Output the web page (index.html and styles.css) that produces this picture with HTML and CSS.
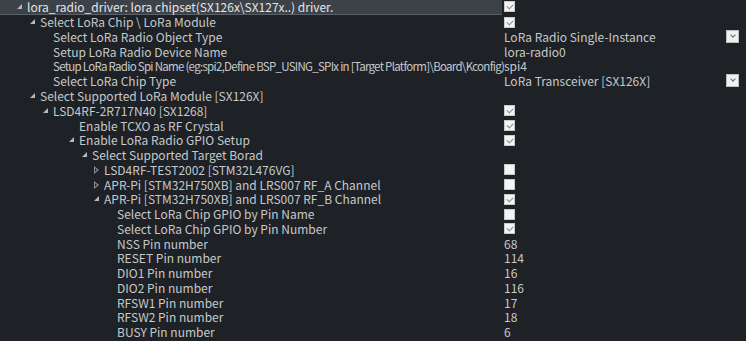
FILE: index.html
```html
<!doctype html>
<html lang="en">
<head>
  <meta charset="utf-8">
  <title>RT-Thread Settings</title>
  <link rel="stylesheet" href="styles.css">
</head>
<body>
  <div class="tree">
    <div class="row sel l0"><span class="tw open"></span><span class="label">lora_radio_driver: lora chipset(SX126x\SX127x..) driver.</span><span class="val"><span class="cb on"></span></span></div>
    <div class="row l1"><span class="tw open"></span><span class="label">Select LoRa Chip \ LoRa Module</span><span class="val"><span class="cb on"></span></span></div>
    <div class="row l2"><span class="tw"></span><span class="label">Select LoRa Radio Object Type</span><span class="val">LoRa Radio Single-Instance<span class="dd"></span></span></div>
    <div class="row l2"><span class="tw"></span><span class="label">Setup LoRa Radio Device Name</span><span class="val">lora-radio0</span></div>
    <div class="row l2"><span class="tw"></span><span class="label long">Setup LoRa Radio Spi Name (eg:spi2,Define BSP_USING_SPIx in [Target Platform]\Board\Kconfig)</span><span class="val">spi4</span></div>
    <div class="row l2"><span class="tw"></span><span class="label">Select LoRa Chip Type</span><span class="val">LoRa Transceiver [SX126X]<span class="dd"></span></span></div>
    <div class="row l1"><span class="tw open"></span><span class="label">Select Supported LoRa Module [SX126X]</span><span class="val"></span></div>
    <div class="row l2"><span class="tw open"></span><span class="label">LSD4RF-2R717N40 [SX1268]</span><span class="val"><span class="cb on"></span></span></div>
    <div class="row l3"><span class="tw"></span><span class="label">Enable TCXO as RF Crystal</span><span class="val"><span class="cb on"></span></span></div>
    <div class="row l3"><span class="tw open"></span><span class="label">Enable LoRa Radio GPIO Setup</span><span class="val"><span class="cb on"></span></span></div>
    <div class="row l4"><span class="tw open"></span><span class="label">Select Supported Target Borad</span><span class="val"></span></div>
    <div class="row l5"><span class="tw closed"></span><span class="label">LSD4RF-TEST2002 [STM32L476VG]</span><span class="val"><span class="cb"></span></span></div>
    <div class="row l5"><span class="tw closed"></span><span class="label">APR-Pi [STM32H750XB] and LRS007 RF_A Channel</span><span class="val"><span class="cb"></span></span></div>
    <div class="row l5"><span class="tw open"></span><span class="label">APR-Pi [STM32H750XB] and LRS007 RF_B Channel</span><span class="val"><span class="cb on"></span></span></div>
    <div class="row l6"><span class="tw"></span><span class="label">Select LoRa Chip GPIO by Pin Name</span><span class="val"><span class="cb"></span></span></div>
    <div class="row l6"><span class="tw"></span><span class="label">Select LoRa Chip GPIO by Pin Number</span><span class="val"><span class="cb on"></span></span></div>
    <div class="row l6"><span class="tw"></span><span class="label">NSS Pin number</span><span class="val">68</span></div>
    <div class="row l6"><span class="tw"></span><span class="label">RESET Pin number</span><span class="val">114</span></div>
    <div class="row l6"><span class="tw"></span><span class="label">DIO1 Pin number</span><span class="val">16</span></div>
    <div class="row l6"><span class="tw"></span><span class="label">DIO2 Pin number</span><span class="val">116</span></div>
    <div class="row l6"><span class="tw"></span><span class="label">RFSW1 Pin number</span><span class="val">17</span></div>
    <div class="row l6"><span class="tw"></span><span class="label">RFSW2 Pin number</span><span class="val">18</span></div>
    <div class="row l6"><span class="tw"></span><span class="label">BUSY Pin number</span><span class="val">6</span></div>
  </div>
</body>
</html>
```

FILE: styles.css
```css
html, body {
  margin: 0;
  padding: 0;
  background: #1e2125;
}
body {
  font-family: "Noto Sans CJK SC", "Noto Sans", sans-serif;
  font-size: 12px;
  color: #c6c9cc;
  overflow: hidden;
}
.tree {
  width: 746px;
}
.row {
  display: flex;
  align-items: center;
  height: 14.77px;
  line-height: 14px;
  white-space: nowrap;
}
.row.sel {
  box-sizing: border-box;
  background: linear-gradient(to right, #3c4248 0, #3c4248 502px, transparent 502px);
  border-bottom: 1px solid;
  border-image: linear-gradient(to right, #5b6168 0, #5b6168 502px, transparent 502px) 1;
  color: #e4e6e8;
}
.l0 { padding-left: 13px; }
.l1 { padding-left: 26px; }
.l2 { padding-left: 39px; }
.l3 { padding-left: 65px; }
.l4 { padding-left: 78px; }
.l5 { padding-left: 90px; }
.l6 { padding-left: 103px; }
.tw {
  flex: 0 0 14px;
  width: 14px;
  height: 14px;
  position: relative;
}
.tw.open::before {
  content: "";
  position: absolute;
  left: 4px;
  top: 4px;
  width: 0;
  height: 0;
  border-left: 5px solid transparent;
  border-bottom: 5px solid #b5b8bb;
}
.tw.closed::before {
  content: "";
  position: absolute;
  left: 4px;
  top: 3px;
  width: 0;
  height: 0;
  border-top: 4px solid transparent;
  border-bottom: 4px solid transparent;
  border-left: 5px solid #8a8e92;
}
.tw.closed::after {
  content: "";
  position: absolute;
  left: 5px;
  top: 5px;
  width: 0;
  height: 0;
  border-top: 2px solid transparent;
  border-bottom: 2px solid transparent;
  border-left: 2.5px solid #1e2125;
}
.label {
  flex: 1 1 0;
  min-width: 0;
  overflow: visible;
}
.label.long {
  font-size: 11.5px;
  letter-spacing: -0.72px;
}
.val {
  flex: 0 0 242px;
  width: 242px;
  padding-left: 2px;
  display: flex;
  align-items: center;
  position: relative;
  height: 100%;
}
.cb {
  width: 11px;
  height: 11px;
  box-sizing: border-box;
  background: #f4f4f4;
  border: 1px solid #c9c9c9;
  position: relative;
}
.cb.on::after {
  content: "";
  position: absolute;
  left: 2px;
  top: 2px;
  width: 5px;
  height: 3px;
  border-left: 1.5px solid #8a8a8a;
  border-bottom: 1.5px solid #8a8a8a;
  transform: rotate(-45deg);
}
.dd {
  position: absolute;
  left: 224px;
  top: 0;
  width: 13px;
  height: 13px;
  box-sizing: border-box;
  background: #f0f0f0;
  border: 1px solid #bdbdbd;
}
.dd::after {
  content: "";
  position: absolute;
  left: 3.5px;
  top: 2.5px;
  width: 3px;
  height: 3px;
  border-right: 1.5px solid #6a6a6a;
  border-bottom: 1.5px solid #6a6a6a;
  transform: rotate(45deg);
}
```
